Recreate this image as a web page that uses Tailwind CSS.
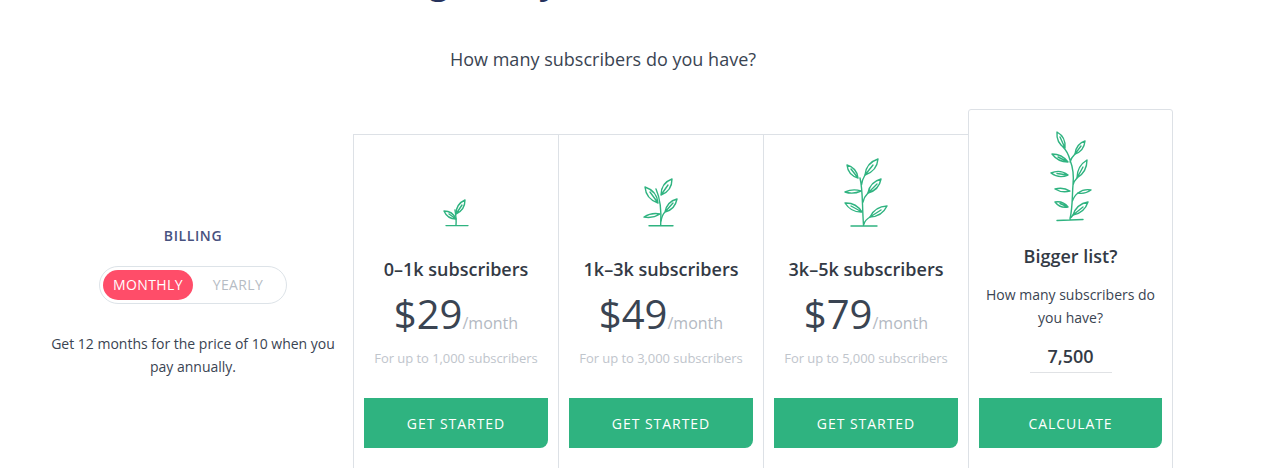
<!DOCTYPE html>
<html>
<head>
<meta charset="utf-8">
<script src="https://cdn.jsdelivr.net/npm/@tailwindcss/browser@4"></script>
</head>
<body class="bg-white overflow-hidden h-[468px] font-['Open_Sans',sans-serif] text-[#333a45]">
<main class="w-[1140px] ml-[33px]">
  <h1 class="text-center text-[36px] leading-[50px] font-semibold text-[#26325c] -mt-[45px] h-[50px] whitespace-nowrap">Pricing always honest and clear</h1>
  <p class="text-center text-lg leading-[26px] mt-[41px] text-[#3a4452] tracking-[0.02px]">How many subscribers do you have?</p>
  <div class="flex items-start mt-[37px]">
    <!-- billing -->
    <aside class="w-[320px] flex flex-col items-center pt-[115px]">
      <h2 class="text-sm leading-[24px] font-semibold text-[#48527f] tracking-[0.6px]">BILLING</h2>
      <div class="mt-[18px] flex items-center w-[188px] h-[38px] rounded-full border border-[#dde3e8] pl-[3px]">
        <span class="w-[90px] h-[30px] rounded-full bg-[#ff4d69] text-white text-sm tracking-[0.4px] flex items-center justify-center">MONTHLY</span>
        <span class="w-[90px] text-center text-sm tracking-[0.4px] text-[#b6bcc4]">YEARLY</span>
      </div>
      <p class="mt-[28px] w-[290px] text-center text-sm leading-[23px] text-[#3a4452]">Get 12 months for the price of 10 when you pay annually.</p>
    </aside>

    <!-- plan 1 -->
    <section class="w-[206px] shrink-0 mt-[25px] h-[340px] border border-[#dde1e6] flex flex-col items-center px-[10px]">
      <div class="h-[95px] flex items-end">
        <svg width="32" height="32" viewBox="440 198 32 32" fill="none" stroke="#2fb380" stroke-width="1.4" stroke-linecap="round" stroke-linejoin="round">
          <path d="M446 225.600H468M456 225C456.500 220 456 216 455 210"/>
          <path d="M456 214Q465 210 465 200Q456 204 456 214ZM456 214L462 205"/>
          <path d="M456 219Q452.600 211 444 211Q447.400 219 456 219ZM456 219L449 214"/>
        </svg>
      </div>
      <h3 class="mt-[25px] text-lg leading-[28px] font-semibold">0–1k subscribers</h3>
      <div class="mt-[3px] flex items-baseline h-[56px]"><span class="text-[40px] leading-[56px] text-[#3a4452]">$29</span><span class="text-base text-[#b3b9c2]">/month</span></div>
      <p class="mt-[6px] text-[13px] leading-[20px] text-[#c0c5cc] tracking-[-0.05px]">For up to 1,000 subscribers</p>
      <a class="mt-[30px] pt-px w-full h-[50px] bg-[#2fb380] rounded-br-lg flex items-center justify-center text-white text-sm tracking-[0.95px]">GET STARTED</a>
    </section>

    <!-- plan 2 -->
    <section class="w-[206px] shrink-0 -ml-px mt-[25px] h-[340px] border border-[#dde1e6] flex flex-col items-center px-[10px]">
      <div class="h-[95px] flex items-end">
        <svg width="40" height="55" viewBox="641 175 40 55" fill="none" stroke="#2fb380" stroke-width="1.4" stroke-linecap="round" stroke-linejoin="round">
          <path d="M649 225.700H673M660.700 225C661.500 212 660 198 656 189"/>
          <path d="M661 195Q672 191 672 179Q661 183 661 195ZM661 195L668 185"/>
          <path d="M658 203Q657 191 645 187Q646 199 658 203ZM658 203L650 192"/>
          <path d="M665 212Q675 209.500 677 199Q667 201.500 665 212ZM665 212L673 203M661 221Q662 215 665 212"/>
          <path d="M660 214Q651.400 212.300 644 217Q652.600 218.700 660 214Z"/>
        </svg>
      </div>
      <h3 class="mt-[25px] text-lg leading-[28px] font-semibold">1k–3k subscribers</h3>
      <div class="mt-[3px] flex items-baseline h-[56px]"><span class="text-[40px] leading-[56px] text-[#3a4452]">$49</span><span class="text-base text-[#b3b9c2]">/month</span></div>
      <p class="mt-[6px] text-[13px] leading-[20px] text-[#c0c5cc] tracking-[-0.05px]">For up to 3,000 subscribers</p>
      <a class="mt-[30px] pt-px w-full h-[50px] bg-[#2fb380] rounded-br-lg flex items-center justify-center text-white text-sm tracking-[0.95px]">GET STARTED</a>
    </section>

    <!-- plan 3 -->
    <section class="w-[206px] shrink-0 -ml-px mt-[25px] h-[340px] border border-[#dde1e6] flex flex-col items-center px-[10px]">
      <div class="h-[95px] flex items-end">
        <svg width="50" height="75" viewBox="841 155 50 75" fill="none" stroke="#2fb380" stroke-width="1.4" stroke-linecap="round" stroke-linejoin="round">
          <path d="M851 226H877M863.500 225C862 205 863 190 860 178M861.500 185Q862 180 865 175M863 202Q864 197 868 193M864 224Q865 220 870 217"/>
          <path d="M858 178Q857 168 847 165Q848 175 858 178ZM858 178L851 169"/>
          <path d="M865 175Q877 171 878 159Q866 163 865 175ZM865 175L873 165"/>
          <path d="M868 193Q879 190 881 179Q870 182 868 193ZM868 193L877 184"/>
          <path d="M861 191Q853 188.300 845 192Q853 194.700 861 191Z"/>
          <path d="M862 212Q856 202.500 845 203Q851 212.500 862 212ZM862 212L851 206"/>
          <path d="M870 217Q882 216.500 887 206Q875 206.500 870 217ZM870 217L881 210"/>
        </svg>
      </div>
      <h3 class="mt-[25px] text-lg leading-[28px] font-semibold">3k–5k subscribers</h3>
      <div class="mt-[3px] flex items-baseline h-[56px]"><span class="text-[40px] leading-[56px] text-[#3a4452]">$79</span><span class="text-base text-[#b3b9c2]">/month</span></div>
      <p class="mt-[6px] text-[13px] leading-[20px] text-[#c0c5cc] tracking-[-0.05px]">For up to 5,000 subscribers</p>
      <a class="mt-[30px] pt-px w-full h-[50px] bg-[#2fb380] rounded-br-lg flex items-center justify-center text-white text-sm tracking-[0.95px]">GET STARTED</a>
    </section>

    <!-- bigger list -->
    <section class="w-[205px] shrink-0 -ml-px h-[370px] border border-[#dde1e6] rounded-t-[3px] flex flex-col items-center px-[10px]">
      <svg class="mt-[18px]" width="50" height="96" viewBox="1046 128 50 96" fill="none" stroke="#2fb380" stroke-width="1.4" stroke-linecap="round" stroke-linejoin="round">
        <path d="M1057 220.500L1083 219.500M1070 219C1073 205 1072 195 1073 185C1074 175 1072 165 1070 160Q1068 152 1063 147M1070 162Q1071 158 1075 154M1073 185Q1074 181 1077 178M1072 202Q1074 196 1078 193M1070 218Q1071 218 1073 215"/>
        <path d="M1065 148Q1066 137 1057 132Q1056 143 1065 148ZM1065 148L1060 137"/>
        <path d="M1075 154Q1084 151 1085 141Q1076 144 1075 154ZM1075 154L1081 146"/>
        <path d="M1068 162Q1062 154 1052 154Q1058 162 1068 162ZM1068 162L1058 157"/>
        <path d="M1077 178Q1087 172 1087 160Q1077 166 1077 178ZM1077 178L1083 167"/>
        <path d="M1068 175Q1060 169 1051 173Q1059 179 1068 175ZM1068 175L1057 173.500"/>
        <path d="M1070 191Q1063 186.700 1055 189Q1062 193.300 1070 191Z"/>
        <path d="M1078 193Q1085 194.400 1091 190Q1084 188.600 1078 193Z"/>
        <path d="M1068 207Q1063 200.600 1055 202Q1060 208.400 1068 207ZM1068 207L1060 203.500"/>
        <path d="M1073 215Q1084.400 213 1088 202Q1076.600 204 1073 215ZM1073 215L1083 207"/>
      </svg>
      <h3 class="mt-[18px] text-lg leading-[28px] font-semibold">Bigger list?</h3>
      <p class="mt-[13px] w-[180px] text-center text-sm leading-[23px] text-[#3a4452]">How many subscribers do you have?</p>
      <div class="mt-[14px] w-[82px] h-[30px] border-b border-[#e0e2e5] text-center text-lg leading-[26px] font-semibold">7,500</div>
      <a class="mt-[25px] pt-px w-full h-[50px] bg-[#2fb380] rounded-br-lg flex items-center justify-center text-white text-sm tracking-[0.95px]">CALCULATE</a>
    </section>
  </div>
</main>
</body>
</html>
